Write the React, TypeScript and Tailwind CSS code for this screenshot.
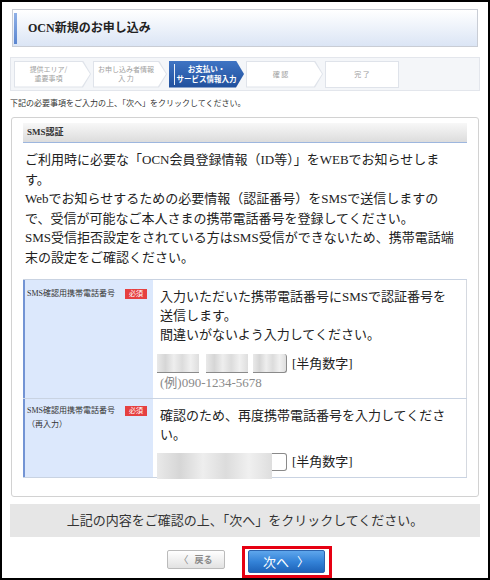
import React from "react";

const arrow =
  "[clip-path:polygon(0_0,calc(100%_-_8px)_0,100%_50%,calc(100%_-_8px)_100%,0_100%)]";

function Step({ lines, className, last }: { lines: string[]; className: string; last?: boolean }) {
  return (
    <div className={`${className} h-[27px] bg-[#dfe3ea] ${last ? "" : arrow}`}>
      <div
        className={`m-px flex h-[25px] flex-col items-center justify-center bg-white text-[7px] leading-[9px] text-[#a0a0a0] ${
          last ? "" : `${arrow} pr-[8px]`
        }`}
      >
        {lines.map((line) => (
          <span key={line}>{line}</span>
        ))}
      </div>
    </div>
  );
}

function ActiveStep() {
  return (
    <div className={`flex h-[27px] w-[75px] items-center bg-gradient-to-b from-[#3f74c4] to-[#1f4f9c] ${arrow}`}>
      <div className="ml-[5px] h-[21px] w-px bg-white/90" />
      <div className="flex flex-1 flex-col items-center whitespace-nowrap pr-[6px] text-[7.5px] font-bold leading-[10px] text-white">
        <span>お支払い・</span>
        <span>サービス情報入力</span>
      </div>
    </div>
  );
}

function Blur({ className }: { className: string }) {
  return (
    <div
      className={`${className} bg-[linear-gradient(90deg,#e9e9e9_0%,#d6d6d6_20%,#eeeeee_40%,#dcdcdc_60%,#f0f0f0_80%,#dedede_100%)]`}
    />
  );
}

function Badge() {
  return (
    <span className="flex h-[10px] items-center bg-[#e64040] px-[4px] text-[7px] leading-none text-white">必須</span>
  );
}

export default function App() {
  return (
    <div className="h-[580px] w-[490px] overflow-hidden border-2 border-black bg-white px-[8px] pt-[7px] font-['Liberation_Serif','Noto_Sans_CJK_JP',serif] text-[#333]">
      {/* header */}
      <div className="mx-[2px] flex h-[38px] items-center border border-[#c9cdd5] bg-gradient-to-b from-white to-[#dbe5f5]">
        <div className="ml-px h-[31px] w-[3px] bg-gradient-to-b from-[#8fb0e6] to-[#5b86d0]" />
        <span className="ml-[11px] text-[12px] font-bold text-[#222]">OCN新規のお申し込み</span>
      </div>

      {/* step bar */}
      <div className="mt-[10px] flex h-[34px] items-center gap-[2px] border border-[#e3e6ec] bg-[#f4f6f9] px-[3px] font-['Noto_Sans_CJK_JP',sans-serif]">
        <Step className="w-[77px]" lines={["提供エリア/", "重要事項"]} />
        <Step className="w-[74px]" lines={["お申し込み者情報", "入 力"]} />
        <ActiveStep />
        <Step className="w-[77px]" lines={["確 認"]} />
        <Step className="w-[74px]" lines={["完 了"]} last />
      </div>

      <p className="mt-[7px] text-[8px] leading-[12px] text-[#333]">
        下記の必要事項をご入力の上、「次へ」をクリックしてください。
      </p>

      {/* main box */}
      <div className="mx-px mt-[7px] rounded-[3px] border border-[#d2d2d2] px-[11px] pb-[18px] pt-[5px]">
        <div className="flex h-[20px] items-center border-b border-[#9db6de] bg-gradient-to-b from-[#f8f8f8] to-[#dcdcdc] pl-[4px] text-[9px] font-bold text-[#333]">
          SMS認証
        </div>

        <p className="mt-[7px] whitespace-nowrap pl-[2px] text-[13px] leading-[19.5px] text-[#222]">
          ご利用時に必要な「OCN会員登録情報（ID等）」をWEBでお知らせしま
          <br />
          す。
          <br />
          Webでお知らせするための必要情報（認証番号）をSMSで送信しますの
          <br />
          で、受信が可能なご本人さまの携帯電話番号を登録してください。
          <br />
          SMS受信拒否設定をされている方はSMS受信ができないため、携帯電話端
          <br />
          末の設定をご確認ください。
        </p>

        {/* table */}
        <div className="mt-[12px] border-t border-[#c9d3e2] text-[#222]">
          <div className="flex h-[119px] border-b border-[#c9d3e2]">
            <div className="flex w-[130px] items-start justify-between border-l-2 border-[#7394d4] bg-[#dce8fc] pl-[2px] pr-[6px] pt-[7px] text-[8px] leading-[14px] text-[#333]">
              <span>SMS確認用携帯電話番号</span>
              <span className="mt-[2px]">
                <Badge />
              </span>
            </div>
            <div className="flex-1 border-r border-[#d5d9e0] pl-[4px] pt-[7px]">
              <p className="ml-[3px] text-[13px] leading-[19px]">
                入力いただいた携帯電話番号にSMSで認証番号を
                <br />
                送信します。
                <br />
                間違いがないよう入力してください。
              </p>
              <div className="mt-[10px] flex items-center">
                <Blur className="h-[19px] w-[42px] border-b border-[#8a8a8a]" />
                <Blur className="ml-[7px] h-[19px] w-[42px] border-b border-[#8a8a8a]" />
                <Blur className="ml-[5px] h-[19px] w-[34px] rounded-r-[3px] border-b border-r border-[#8a8a8a]" />
                <span className="ml-[5px] text-[13px]">[半角数字]</span>
              </div>
              <p className="ml-[3px] text-[13px] leading-[18px] text-[#8a8a8a]">(例)090-1234-5678</p>
            </div>
          </div>

          <div className="flex h-[79px] border-b border-[#c9d3e2]">
            <div className="flex w-[130px] items-start justify-between border-l-2 border-[#7394d4] bg-[#dce8fc] pl-[2px] pr-[6px] pt-[5px] text-[8px] leading-[14px] text-[#333]">
              <span>
                SMS確認用携帯電話番号
                <br />
                （再入力）
              </span>
              <span className="mt-[2px]">
                <Badge />
              </span>
            </div>
            <div className="flex-1 border-r border-[#d5d9e0] pl-[4px] pt-[7px]">
              <p className="ml-[3px] text-[13px] leading-[19px]">
                確認のため、再度携帯電話番号を入力してくださ
                <br />
                い。
              </p>
              <div className="mt-[9px] flex items-start">
                <Blur className="h-[26px] w-[115px]" />
                <div className="h-[18px] w-[15px] rounded-r-[3px] border border-l-0 border-[#8a8a8a] bg-white" />
                <span className="ml-[5px] text-[13px] leading-[18px]">[半角数字]</span>
              </div>
            </div>
          </div>
        </div>
      </div>

      {/* note */}
      <div className="mt-[7px] flex h-[33px] items-center justify-center bg-[#e6e6e6] text-[13px] text-[#333]">
        上記の内容をご確認の上、「次へ」をクリックしてください。
      </div>

      {/* buttons */}
      <div className="mt-[9px] flex items-start justify-center gap-[17px] pl-[8px]">
        <button
          type="button"
          className="mt-[4px] flex h-[19px] w-[58px] items-center justify-center gap-[6px] rounded-[2px] border border-[#bbbbbb] bg-gradient-to-b from-white to-[#e2e2e2] font-['Noto_Sans_CJK_JP',sans-serif] text-[9px] font-bold text-[#8a8a8a]"
        >
          <span className="text-[10px] font-normal">〈</span>
          <span>戻る</span>
        </button>
        <div className="border-[3px] border-[#e60012] pb-[2px] pl-[3px] pr-[4px] pt-px">
          <button
            type="button"
            className="flex h-[23px] w-[77px] items-center justify-center gap-[8px] rounded-[2px] border border-[#2b62ad] bg-gradient-to-b from-[#5ea6ec] via-[#3483d8] to-[#1e63b8] font-['Noto_Sans_CJK_JP',sans-serif] text-[13px] text-white"
          >
            <span>次へ</span>
            <span className="text-[12px]">〉</span>
          </button>
        </div>
      </div>
    </div>
  );
}
